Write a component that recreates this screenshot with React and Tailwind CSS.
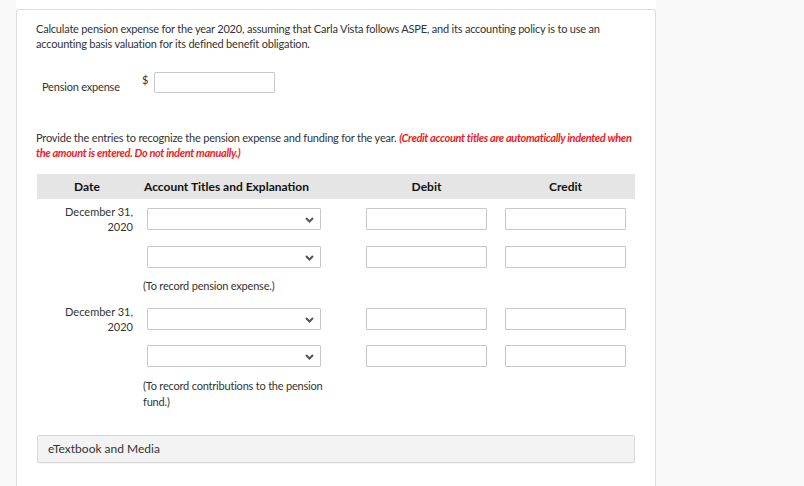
import React from "react";

const font = { fontFamily: "Lato, 'Open Sans', sans-serif" };

function Chevron() {
  return (
    <svg width="9" height="6" viewBox="0 0 9 6" className="absolute right-[6px] top-[8px]">
      <polyline points="1,1 4.5,4.5 8,1" fill="none" stroke="#555" strokeWidth="2" />
    </svg>
  );
}

function Select() {
  return (
    <div className="relative ml-[10px] h-[22px] w-[174px] border border-[#c8c8c8] bg-white rounded-[1px]">
      <Chevron />
    </div>
  );
}

function Row({ date, className = "" }) {
  return (
    <div className={`grid grid-cols-[100px_210px_149px_139px] items-start ${className}`}>
      <div className="pr-[4px] text-right text-[11px] leading-[15px] text-[#333]">
        {date ? (
          <>
            December 31,
            <br />
            2020
          </>
        ) : null}
      </div>
      <div className={date ? "pt-[4px]" : ""}>
        <Select />
      </div>
      <div className={date ? "pt-[4px]" : ""}>
        <div className="ml-[19px] h-[22px] w-[121px] border border-[#c8c8c8] bg-white rounded-[1px]" />
      </div>
      <div className={date ? "pt-[4px]" : ""}>
        <div className="ml-[9px] h-[22px] w-[121px] border border-[#c8c8c8] bg-white rounded-[1px]" />
      </div>
    </div>
  );
}

export default function App() {
  return (
    <div className="min-h-[486px] w-[804px] bg-[#f9f9f9] overflow-hidden" style={font}>
      <div className="ml-[16px] w-[640px] bg-white pt-[9px] min-h-[486px]">
        <div className="min-h-[477px] rounded-t-[3px] border-x border-t border-[#dcdcdc] px-[19px] pt-[11px] text-[#333]">
          <p className="text-[11px] leading-[15px] tracking-[-0.2px]">
            Calculate pension expense for the year 2020, assuming that Carla Vista follows ASPE, and its accounting
            policy is to use an accounting basis valuation for its defined benefit obligation.
          </p>

          <div className="mt-[21px] flex items-start">
            <div className="ml-[6px] mt-[8px] w-[100px] text-[11px] leading-[14px] tracking-[-0.2px]">Pension expense</div>
            <div className="mt-[1px] w-[12px] text-[11px] leading-[14px]">$</div>
            <div className="h-[21px] w-[121px] border border-[#c8c8c8] bg-white rounded-[1px]" />
          </div>

          <p className="mt-[36px] text-[11px] leading-[15px] tracking-[-0.2px]">
            Provide the entries to recognize the pension expense and funding for the year.{" "}
            <span className="font-bold italic tracking-[-0.34px] text-[#ee1b24]">
              (Credit account titles are automatically indented when the amount is entered. Do not indent manually.)
            </span>
          </p>

          <div className="mt-[14px] w-[598px] ml-[1px]">
            <div className="grid h-[25px] grid-cols-[100px_210px_149px_139px] items-center bg-[#e5e5e5] text-[12px] font-bold text-[#111]">
              <div className="text-center">Date</div>
              <div className="pl-[7px]">Account Titles and Explanation</div>
              <div className="ml-[19px] w-[121px] text-center">Debit</div>
              <div className="ml-[9px] w-[121px] text-center">Credit</div>
            </div>

            <Row date className="mt-[5px]" />
            <Row className="mt-[12px]" />
            <div className="grid grid-cols-[100px_210px_149px_139px]">
              <div />
              <div className="mt-[10px] pl-[6px] text-[11px] leading-[16px] tracking-[-0.2px]">(To record pension expense.)</div>
            </div>
            <Row date className="mt-[10px]" />
            <Row className="mt-[11px]" />
            <div className="grid grid-cols-[100px_210px_149px_139px]">
              <div />
              <div className="mt-[11px] w-[190px] pl-[6px] text-[11px] leading-[16px] tracking-[-0.2px]">
                (To record contributions to the pension fund.)
              </div>
            </div>

            <div className="mt-[25px] flex h-[28px] items-center rounded-[2px] border border-[#d8d8d8] bg-[#f3f3f3] pl-[10px] text-[12px] text-[#333] shadow-[0_1px_1px_rgba(0,0,0,0.05)]">
              eTextbook and Media
            </div>
          </div>
        </div>
      </div>
    </div>
  );
}
